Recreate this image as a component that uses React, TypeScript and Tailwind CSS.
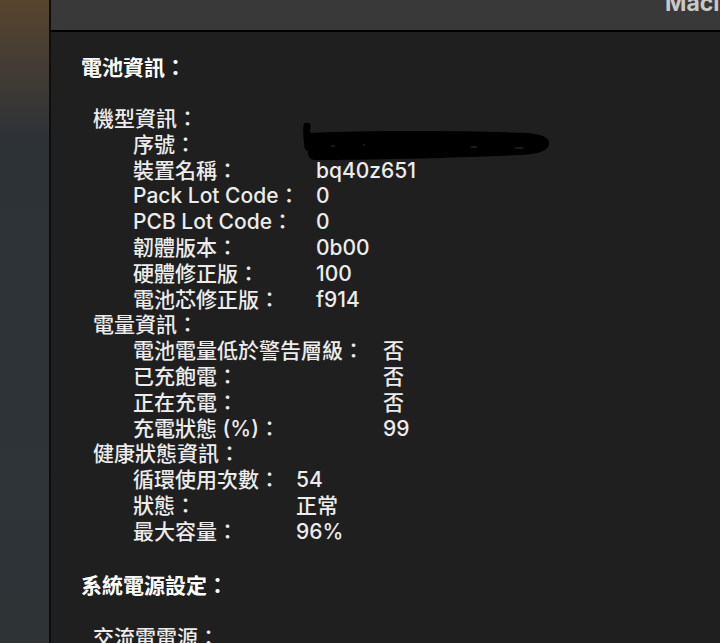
import * as React from 'react';

type Item = { label: string; value: string; redacted?: boolean };

const FONT = "font-['Inter','Noto_Sans_CJK_TC',sans-serif]";

// black marker scribble hiding the serial number
const Scribble: React.FC = () => (
  <svg
    className="absolute left-[-15px] top-[-9px] pointer-events-none"
    width="252"
    height="40"
    viewBox="0 0 252 40"
  >
    <path d="M6,3 C5,10 6,16 7,24" stroke="#000" strokeWidth="7" strokeLinecap="round" fill="none" />
    <path
      d="M7,10 C80,7 170,8 226,10 C241,11 249,15 248,21 C247,28 238,31 220,32 C150,35 70,37 14,37 C7,37 5,31 7,10 Z"
      fill="#000"
    />
    <path d="M30,23 L34,23 M62,22 L64,22 M170,24 L176,24 M214,25 L222,25" stroke="#333" strokeWidth="1" />
  </svg>
);

const Group: React.FC<{ title: string; labelWidth: number; items: Item[] }> = ({ title, labelWidth, items }) => {
  return (
    <div>
      <div className="pl-[12px]">{title}</div>
      {items.map((it) => (
        <div key={it.label} className="flex pl-[52px]">
          <div
            className={labelWidth === 183 ? 'w-[183px] shrink-0' : labelWidth === 250 ? 'w-[250px] shrink-0' : 'w-[163px] shrink-0'}
          >
            {it.label}
          </div>
          <div className="relative">
            {it.value}
            {it.redacted && <Scribble />}
          </div>
        </div>
      ))}
    </div>
  );
};

const App: React.FC = () => {
  return (
    <div className={`flex h-[643px] w-[720px] overflow-hidden ${FONT}`}>
      <div className="w-[49px] shrink-0 bg-linear-to-b from-[#58452f] via-[#2d3237] via-[22%] to-[#2e3436]" />
      <div className="flex flex-1 flex-col border-l-2 border-[#0e0e0e] min-w-0">
        <div className="h-[32px] shrink-0 overflow-hidden border-b-2 border-black bg-[#393939]">
          <div className="-mt-[8px] whitespace-nowrap pl-[614px] text-[23px] font-bold leading-[23px] text-[#c9c9c9]">
            Macintosh HD
          </div>
        </div>
        <div className="flex-1 bg-[#1f1f1f] pl-[30px] pt-[22.5px] text-[21px] font-medium leading-[25.8px] text-[#ececec]">
          <div className="font-bold text-white">電池資訊：</div>
          <div className="h-[25.8px]" />
          <Group
            title="機型資訊："
            labelWidth={183}
            items={[
              { label: '序號：', value: '', redacted: true },
              { label: '裝置名稱：', value: 'bq40z651' },
              { label: 'Pack Lot Code：', value: '0' },
              { label: 'PCB Lot Code：', value: '0' },
              { label: '韌體版本：', value: '0b00' },
              { label: '硬體修正版：', value: '100' },
              { label: '電池芯修正版：', value: 'f914' },
            ]}
          />
          <Group
            title="電量資訊："
            labelWidth={250}
            items={[
              { label: '電池電量低於警告層級：', value: '否' },
              { label: '已充飽電：', value: '否' },
              { label: '正在充電：', value: '否' },
              { label: '充電狀態 (%)：', value: '99' },
            ]}
          />
          <Group
            title="健康狀態資訊："
            labelWidth={163}
            items={[
              { label: '循環使用次數：', value: '54' },
              { label: '狀態：', value: '正常' },
              { label: '最大容量：', value: '96%' },
            ]}
          />
          <div className="h-[25.8px]" />
          <div className="mt-[3px] font-bold text-white">系統電源設定：</div>
          <div className="h-[25.8px]" />
          <div className="pl-[12px]">交流電電源：</div>
        </div>
      </div>
    </div>
  );
};

export default App;
